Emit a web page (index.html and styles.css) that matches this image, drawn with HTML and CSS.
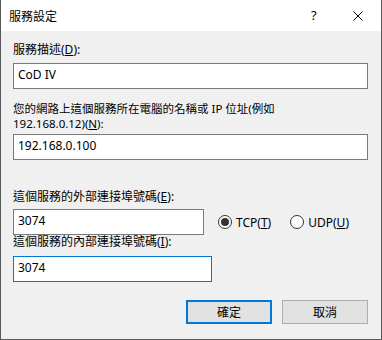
FILE: index.html
```html
<!DOCTYPE html>
<html lang="zh-Hant">
<head>
    <meta charset="UTF-8">
    <title>服務設定</title>
    <link rel="stylesheet" href="styles.css">
</head>
<body>
    <div class="dialog">
        <div class="titlebar">
            <span class="title">服務設定</span>
            <span class="help">?</span>
            <span class="close">
                <svg width="10" height="10" viewBox="0 0 10 10"><path d="M0.5 0.5 L9.5 9.5 M9.5 0.5 L0.5 9.5" stroke="#000" stroke-width="1" fill="none"/></svg>
            </span>
        </div>
        <div class="content">
            <label class="label first">服務描述(<u>D</u>):</label>
            <div class="field wide">CoD IV</div>

            <label class="label second">您的網路上這個服務所在電腦的名稱或 IP 位址(例如<br>192.168.0.12)(<u>N</u>):</label>
            <div class="field wide ip">192.168.0.100</div>

            <label class="label third">這個服務的外部連接埠號碼(<u>E</u>):</label>
            <div class="port-row">
                <div class="field narrow">3074</div>
                <div class="radios">
                    <span class="radio checked"><span class="dot"></span>TCP(<u>T</u>)</span>
                    <span class="radio"><span class="dot"></span>UDP(<u>U</u>)</span>
                </div>
            </div>

            <label class="label fourth">這個服務的內部連接埠號碼(<u>I</u>):</label>
            <div class="field narrow focused">3074</div>

            <div class="buttons">
                <button class="btn default">確定</button>
                <button class="btn">取消</button>
            </div>
        </div>
    </div>
</body>
</html>
```

FILE: styles.css
```css
* {
    box-sizing: border-box;
}

body {
    margin: 0;
    font-family: "Noto Sans", "Noto Sans CJK TC", sans-serif;
    font-size: 12px;
    color: #000;
    background: #f0f0f0;
}

.dialog {
    width: 382px;
    height: 340px;
    background: #f0f0f0;
    border: 1px solid #5a5a5a;
    border-top: none;
    display: flex;
    flex-direction: column;
}

.titlebar {
    height: 31px;
    background: #fff;
    display: flex;
    align-items: center;
    padding-left: 8px;
}

.title {
    font-size: 12px;
    flex: 1;
}

.help {
    width: 42px;
    font-size: 13px;
    margin-top: -2px;
}

.close {
    width: 28px;
    display: flex;
    align-items: center;
    margin-top: 1px;
}

.content {
    padding: 12px 13px 0 12px;
    display: flex;
    flex-direction: column;
}

.label {
    line-height: 14px;
}

.label.second {
    margin-top: 12px;
    line-height: 15px;
    font-size: 11.5px;
}

.label.third { margin-top: 30px; }

.field {
    height: 26px;
    border: 1px solid #7a7a7a;
    background: #fff;
    padding-left: 4px;
    line-height: 22px;
    font-size: 12px;
}

.first + .field { margin-top: 6px; }
.ip { margin-top: 3px; }

.wide {
    width: 100%;
}

.narrow {
    width: 199px;
}

.focused {
    border-color: #0078d7;
    margin-top: 7px;
}

.port-row {
    display: flex;
    align-items: center;
    margin-top: 5px;
}

.radios {
    display: flex;
    align-items: center;
    margin-left: 14px;
}

.radio {
    display: flex;
    align-items: center;
    margin-right: 19px;
}

.radio .dot {
    width: 14px;
    height: 14px;
    border: 1px solid #333;
    border-radius: 50%;
    background: #fff;
    margin-right: 4px;
    display: flex;
    align-items: center;
    justify-content: center;
}

.radio.checked .dot::after {
    content: "";
    width: 8px;
    height: 8px;
    border-radius: 50%;
    background: #333;
}

.buttons {
    display: flex;
    justify-content: flex-end;
    gap: 10px;
    margin-top: 18px;
}

.btn {
    width: 86px;
    height: 24px;
    background: #e1e1e1;
    border: 1px solid #adadad;
    font-family: inherit;
    font-size: 12px;
    padding: 0;
    color: #000;
}

.btn.default {
    border: 2px solid #0078d7;
}
```
